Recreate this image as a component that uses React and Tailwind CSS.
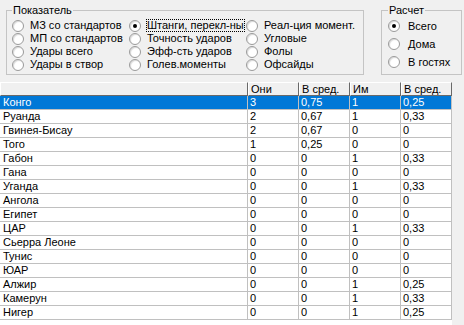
const font = { fontFamily: '"Liberation Sans", Arial, sans-serif' }

const leftOptions = [
  ['МЗ со стандартов', 'Штанги, перекл-ны', 'Реал-ция момент.'],
  ['МП со стандартов', 'Точность ударов', 'Угловые'],
  ['Удары всего', 'Эфф-сть ударов', 'Фолы'],
  ['Удары в створ', 'Голев.моменты', 'Офсайды'],
]

const rows = [
  ['Конго', '3', '0,75', '1', '0,25'],
  ['Руанда', '2', '0,67', '1', '0,33'],
  ['Гвинея-Бисау', '2', '0,67', '0', '0'],
  ['Того', '1', '0,25', '0', '0'],
  ['Габон', '0', '0', '1', '0,33'],
  ['Гана', '0', '0', '0', '0'],
  ['Уганда', '0', '0', '1', '0,33'],
  ['Ангола', '0', '0', '0', '0'],
  ['Египет', '0', '0', '0', '0'],
  ['ЦАР', '0', '0', '1', '0,33'],
  ['Сьерра Леоне', '0', '0', '0', '0'],
  ['Тунис', '0', '0', '0', '0'],
  ['ЮАР', '0', '0', '0', '0'],
  ['Алжир', '0', '0', '1', '0,25'],
  ['Камерун', '0', '0', '1', '0,33'],
  ['Нигер', '0', '0', '1', '0,25'],
]

function Radio({ checked }) {
  return (
    <span className="w-[12px] h-[12px] shrink-0 rounded-full border border-[#9a9a9a] bg-white shadow-[inset_1px_1px_1px_rgba(0,0,0,0.15)] flex items-center justify-center">
      {checked && <span className="w-[4px] h-[4px] rounded-full bg-black" />}
    </span>
  )
}

function Option({ label, checked, focused }) {
  return (
    <div className="flex items-center h-[13px] min-w-0">
      <Radio checked={checked} />
      {focused ? (
        <span className="ml-[5px] border border-dotted border-black px-[0px] leading-[11px] whitespace-nowrap overflow-hidden">
          {label}
        </span>
      ) : (
        <span className="ml-[6px] whitespace-nowrap">{label}</span>
      )}
    </div>
  )
}

export default function App() {
  return (
    <div className="w-[464px] h-[325px] bg-[#f0f0f0] overflow-hidden text-[11px] text-black" style={font}>
      <div className="flex items-start h-[82px] pt-[4px]">
        <fieldset className="ml-[6px] w-[358px] h-[71px] border border-[#c4c4c4] pl-[5px] pt-[2px]">
          <legend className="px-[1px] leading-[13px]">Показатель</legend>
          <div className="grid grid-cols-[117px_117px_112px]">
            {leftOptions.map((row, r) =>
              row.map((label, c) => (
                <Option key={label} label={label} checked={r === 0 && c === 1} focused={r === 0 && c === 1} />
              ))
            )}
          </div>
        </fieldset>
        <fieldset className="ml-[17px] w-[81px] h-[71px] border border-[#c4c4c4] pl-[6px]">
          <legend className="px-[1px] leading-[13px]">Расчет</legend>
          {['Всего', 'Дома', 'В гостях'].map((label, i) => (
            <div key={label} className="flex items-center h-[18px]">
              <Radio checked={i === 0} />
              <span className="ml-[8px] whitespace-nowrap">{label}</span>
            </div>
          ))}
        </fieldset>
      </div>

      <div className="flex">
        <div className="w-[452px] h-[243px] bg-white">
          <div className="grid grid-cols-[248px_51px_51px_51px_51px] h-[14px] bg-[#f0f0f0]">
            {['', 'Они', 'В сред.', 'Им', 'В сред.'].map((h, i) => (
              <div
                key={i}
                className="h-[14px] border-t border-l border-t-white border-l-white border-r border-b border-r-[#696969] border-b-[#696969] pl-[2px] leading-[12px] whitespace-nowrap overflow-hidden"
              >
                {h}
              </div>
            ))}
          </div>
          {rows.map((row, r) => (
            <div
              key={row[0]}
              className={`grid grid-cols-[248px_51px_51px_51px_51px] h-[14px] ${r === 0 ? 'bg-[#0078d7] text-white' : ''}`}
            >
              {row.map((v, i) => (
                <div
                  key={i}
                  className={`h-[14px] border-b border-r border-[#c0c0c0] leading-[13px] whitespace-nowrap overflow-hidden ${i === 0 ? 'pl-[3px]' : 'pl-[2px]'}`}
                >
                  {v}
                </div>
              ))}
            </div>
          ))}
        </div>
      </div>
    </div>
  )
}
